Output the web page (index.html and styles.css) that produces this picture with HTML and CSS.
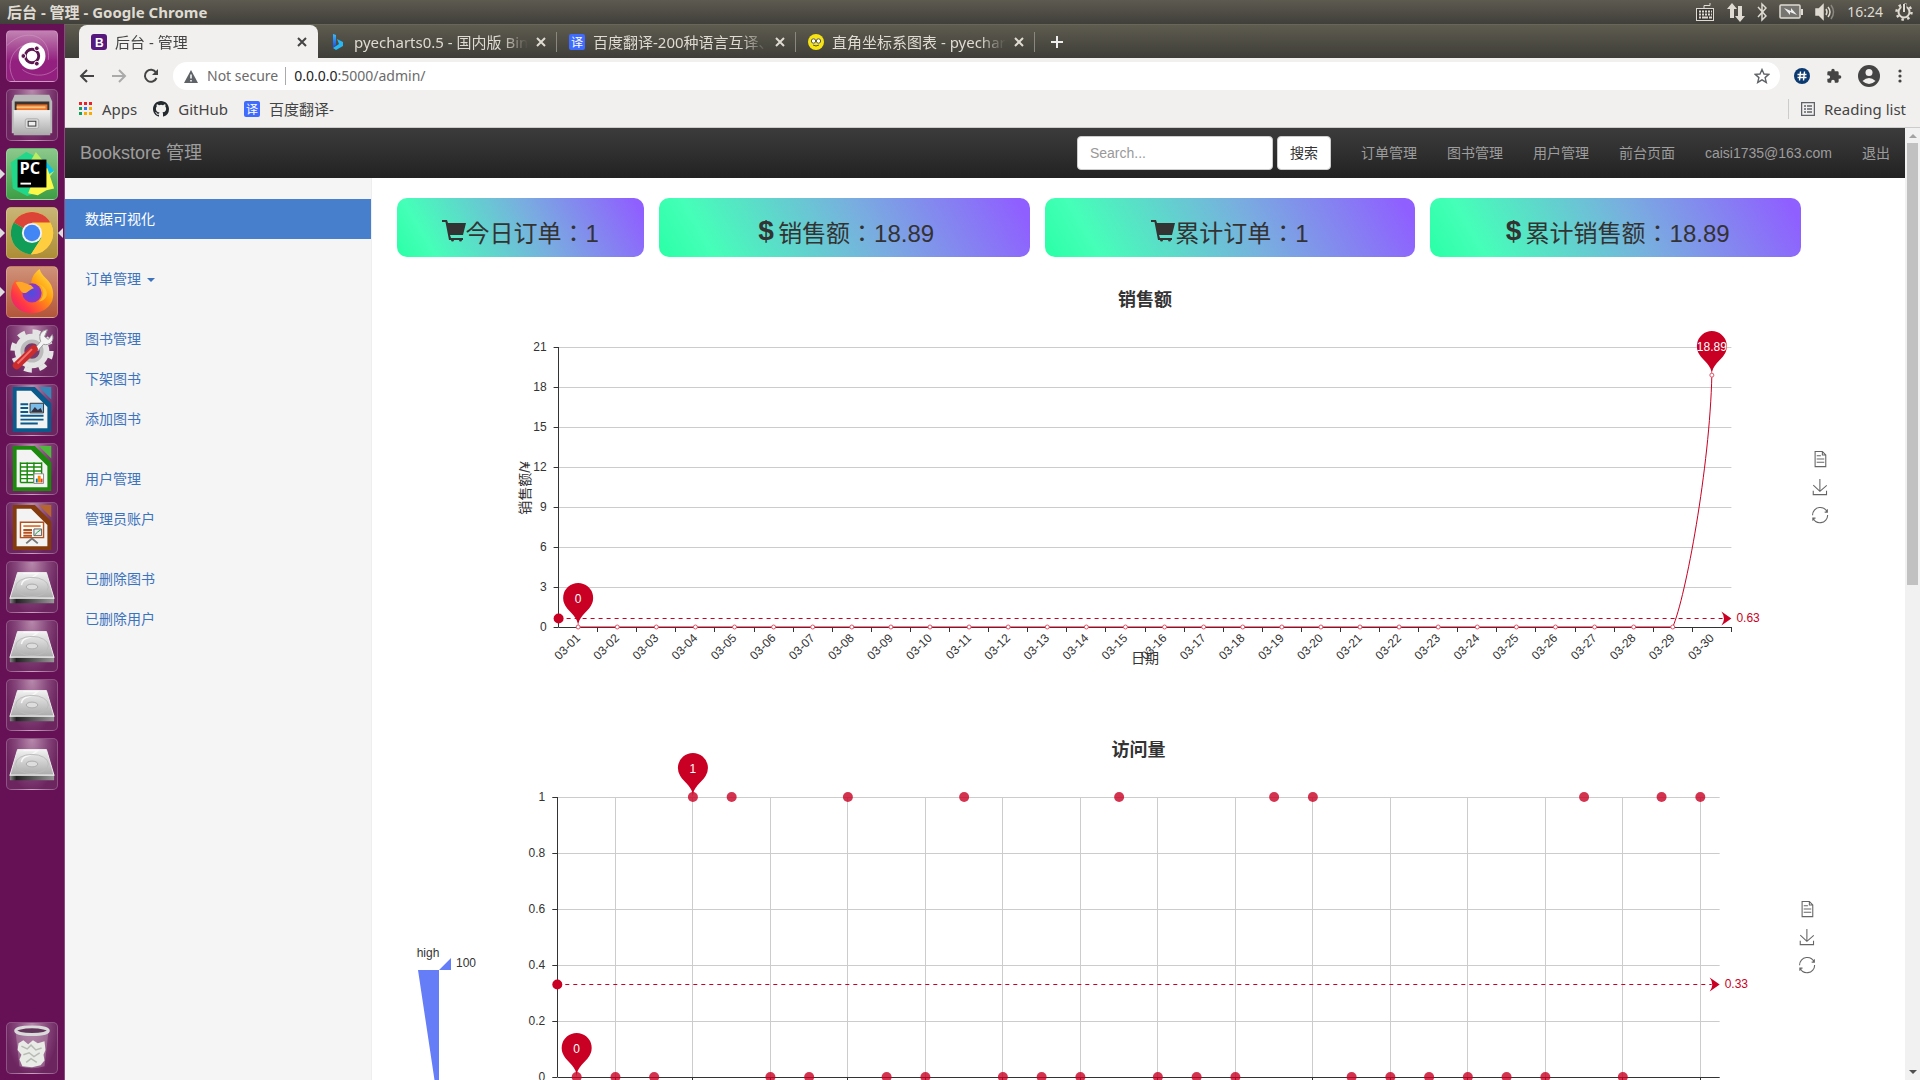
FILE: index.html
```html
<!DOCTYPE html>
<html lang="en">
<head>
<meta charset="utf-8">
<title>后台 - 管理</title>
<link rel="stylesheet" href="styles.css">
</head>
<body>
<svg class="defs" aria-hidden="true">
  <defs>
    <linearGradient id="metal" x1="0" y1="0" x2="0" y2="1"><stop offset="0" stop-color="#f2f2f2"/><stop offset="1" stop-color="#a9a9a9"/></linearGradient>
    <linearGradient id="edge" x1="0" y1="0" x2="1" y2="0"><stop offset="0" stop-color="#888"/><stop offset=".15" stop-color="#222"/><stop offset="1" stop-color="#999"/></linearGradient>
    <linearGradient id="fox" x1="1" y1="0" x2="0" y2="1"><stop offset="0" stop-color="#fff44f"/><stop offset=".4" stop-color="#ff980e"/><stop offset=".75" stop-color="#ff3647"/><stop offset="1" stop-color="#e31587"/></linearGradient>
    <radialGradient id="globe"><stop offset="0" stop-color="#4a4fe0"/><stop offset="1" stop-color="#9033c8"/></radialGradient>
    <linearGradient id="bing" x1="0" y1="0" x2="0" y2="1"><stop offset="0" stop-color="#37bdff"/><stop offset="1" stop-color="#1b48e0"/></linearGradient>
    <symbol id="disk" viewBox="0 0 52 52">
      <path d="M11 11h30l8 27H3z" fill="url(#metal)" stroke="#eee"/>
      <path d="M17 12h15c-7 7-16 4-17 12" fill="none" stroke="#f8f8f8" stroke-width="1.500"/>
      <ellipse cx="26" cy="26" rx="17" ry="10" fill="none" stroke="#bbb"/>
      <ellipse cx="26" cy="26" rx="6" ry="3" fill="#ddd" stroke="#aaa"/>
      <path d="M3 38h46v5H3z" fill="url(#edge)"/><path d="M3 37.500h46" stroke="#fff"/>
    </symbol>
    <symbol id="cart" viewBox="0 0 24 24"><path d="M0 1h5l1 3h18l-3 12H8l1 3h12v2h-1a1.500 1.500 0 1 1-3 0h-5a1.500 1.500 0 1 1-3 0H7L3.500 3H0z"/></symbol>
    <symbol id="close" viewBox="0 0 10 10"><path d="M1 1l8 8M9 1l-8 8" stroke="currentColor" stroke-width="2"/></symbol>
  </defs>
</svg>

<header class="panel">
  <span class="panel-title">后台 - 管理 - Google Chrome</span>
  <div class="indicators">
    <svg width="20" height="24" viewBox="0 0 20 24" fill="none" stroke="#dfdbd2"><path d="M9 8V5.500h6V3"/><rect x="1.500" y="8.500" width="17" height="12" fill="#3a3935"/><path d="M4 11.500h13M4 14.500h13" stroke-width="2" stroke-dasharray="2 1"/><path d="M4 17.500h2m1 0h6m1 0h3" stroke-width="2"/></svg>
    <svg width="18" height="22" viewBox="0 0 18 22" fill="#dfdbd2"><path d="M5 2l5 6H7v9H3V8H0zM13 21l5-6h-3V5h-4v10H8z"/></svg>
    <svg width="10" height="20" viewBox="0 0 10 20" fill="none" stroke="#dfdbd2" stroke-width="1.500"><path d="M1 5l8 9-4 4V2l4 4-8 9"/></svg>
    <svg width="24" height="16" viewBox="0 0 24 16"><rect x="1" y="1" width="20" height="13" rx="1" fill="#777570" stroke="#dfdbd2" stroke-width="1.500"/><path d="M22 5h2v6h-2z" fill="#dfdbd2"/><path d="M5 4l7 3V4l6 7-7-3v3z" fill="#eee"/></svg>
    <svg width="20" height="18" viewBox="0 0 20 18" fill="none" stroke="#dfdbd2" stroke-width="1.500"><path d="M1 6h3l4-4v14l-4-4H1z" fill="#dfdbd2"/><path d="M11 6q2 3 0 6M13 4q4 5 0 10"/><path d="M16 2q5 7 0 14" stroke="#8a8880"/></svg>
    <span class="clock">16:24</span>
    <svg width="18" height="20" viewBox="0 0 18 20" fill="none" stroke="#dfdbd2"><circle cx="9" cy="10" r="5.500" stroke-width="2"/><circle cx="9" cy="10" r="7.500" stroke-width="2.500" stroke-dasharray="2.500 3.400"/><path d="M9 2v8" stroke="#45443e" stroke-width="5"/><path d="M9 2v8" stroke-width="2"/></svg>
  </div>
</header>

<div class="desktop">
  <nav class="launcher" aria-label="Launcher">
    <button class="tile dash" aria-label="Ubuntu"><svg viewBox="0 0 52 52"><g fill="none" stroke="#d8a0cc" stroke-opacity=".5"><path d="M0 15C20-5 46 5 43 30M8 52C-4 34 8 12 26 14M52 38C38 52 20 44 16 40"/></g><circle cx="26" cy="26" r="14" fill="#fff"/><circle cx="26" cy="26" r="7" fill="none" stroke="#5e1650" stroke-width="3"/><g fill="#5e1650" stroke="#fff"><circle cx="17" cy="26" r="2.500"/><circle cx="31" cy="18" r="2.500"/><circle cx="31" cy="34" r="2.500"/></g></svg></button>
    <button class="tile" aria-label="Files"><svg viewBox="0 0 52 52"><path d="M8 5h36l3 7v33H5V12z" fill="#b9b9b9"/><path d="M8 12h36v12H8z" fill="#3c3230"/><path d="M10 15h32v8H10z" fill="#e8762c"/><path d="M10 18h30" stroke="#ffc27d" stroke-width="2"/><path d="M7 21h38v26H7z" fill="url(#metal)"/><path d="M7 21.500h38" stroke="#eee"/><rect x="19" y="30" width="14" height="10" rx="2" fill="#ddd" stroke="#aaa"/><rect x="22" y="32.500" width="8" height="5" fill="#eee" stroke="#333"/></svg></button>
    <button class="tile green running" aria-label="PyCharm"><svg viewBox="0 0 52 52"><path d="M4 14L20 3l14 7 8 6-7 28-14 5-15-8z" fill="#21d789"/><path d="M30 3l8 10-15 2zM38 14l11 9-6 8z" fill="#b7ee62"/><path d="M38 10l11 13-7 4z" fill="#07c3f2"/><path d="M42 20l7 21-8 2-9 5-10-2 10-25z" fill="#fcf84a"/><path d="M11 11h30v29H11z" fill="#000"/><path d="M14 35h11v2H14z" fill="#fff"/><text x="13" y="26" class="logo-text">PC</text></svg></button>
    <button class="tile gold running focused" aria-label="Google Chrome"><svg viewBox="0 0 52 52"><circle cx="26" cy="26" r="22" fill="#ffcd40"/><path d="M26 26L7 15A22 22 0 0 1 45 15z" fill="#db4437"/><path d="M26 26L7 15A22 22 0 0 0 25 48L36 31z" fill="#0f9d58"/><path d="M26 15h19A22 22 0 0 1 25 48L36 31z" fill="#ffcd40"/><circle cx="26" cy="26" r="10.500" fill="#f1f1f1"/><circle cx="26" cy="26" r="8.500" fill="#4285f4"/></svg></button>
    <button class="tile rust running" aria-label="Firefox"><svg viewBox="0 0 52 52"><path d="M34 2c2 8 9 10 12 17 7 17-5 29-20 29C11 48 1 36 5 22c1-5 3-7 5-9l1 5 5-3c2 3 5 3 9 4 0-7 3-13 9-17z" fill="url(#fox)"/><circle cx="26" cy="27" r="10" fill="url(#globe)"/><path d="M9 16c5-2 10 1 16 3l3 3c-5 1-6 5-10 5-3 0-4-3-9-11z" fill="#ffa52a"/><path d="M32 17c8 5 7 15 1 19 10-1 13-13-1-19z" fill="#ffbd2e"/></svg></button>
    <button class="tile" aria-label="System Settings"><svg viewBox="0 0 52 52"><circle cx="26" cy="26" r="18" fill="#e4e4e4"/><circle cx="26" cy="26" r="20" fill="none" stroke="#e4e4e4" stroke-width="5" stroke-dasharray="8 7.700"/><circle cx="26" cy="26" r="10" fill="#763a6b" stroke="#bbb" stroke-width="4"/><path d="M29 23l6-7c-3-7 2-12 7-12l-3 7 4 3 4-5c3 6-3 12-9 10l-6 7z" fill="#f3f3f3" stroke="#999"/><path d="M10 41l18-17" stroke="#cc2b2b" stroke-width="8" stroke-linecap="round"/><path d="M11 39l15-15" stroke="#ef7171" stroke-width="2"/></svg></button>
    <button class="tile" aria-label="Writer"><svg viewBox="0 0 52 52"><path d="M6 2h23l17 17v30H6z" fill="#0b5a8c"/><path d="M10 6h15l17 17v22H10z" fill="#f3f3f3"/><path d="M33 2h13v13z" fill="#3789b8"/><path d="M14 20h8m-8 4h8m-8 4h8m-8 4h24M14 36h24M14 40h18" stroke="#0b5a8c" stroke-width="2"/><path d="M24 19h14v10H24z" fill="#79bce9" stroke="#333"/><path d="M25 28l4-5 3 3 3-2 2 4z" fill="#334"/></svg></button>
    <button class="tile" aria-label="Calc"><svg viewBox="0 0 52 52"><path d="M6 2h23l17 17v30H6z" fill="#1b8a0c"/><path d="M10 6h15l17 17v22H10z" fill="#f3f3f3"/><path d="M33 2h13v13z" fill="#4fb93e"/><path d="M14 19h22v21H14z" fill="#fff"/><path d="M14 20h22M14 24h22M14 28h22M14 32h22M14 36h22M14 40h22M14 19v21m7-21v21m7-21v21m8-21v21" stroke="#1b8a0c" stroke-width="1.500"/><path d="M28 31h10v10H28z" fill="#fff" stroke="#888"/><path d="M30 36h2v4h-2z" fill="#07a"/><path d="M32 33h3v7h-3z" fill="#f80"/><path d="M35 36h2v4h-2z" fill="#d42"/></svg></button>
    <button class="tile" aria-label="Impress"><svg viewBox="0 0 52 52"><path d="M6 2h23l17 17v30H6z" fill="#833a0d"/><path d="M10 6h15l17 17v22H10z" fill="#f3f3f3"/><path d="M33 2h13v13z" fill="#b5652e"/><path d="M14 20h24v16H14z" fill="#fff" stroke="#b5511e" stroke-width="1.500"/><path d="M17 24h18" stroke="#e37c41" stroke-width="2"/><path d="M17 28h9m-9 3h9m-9 3h9" stroke="#b5511e" stroke-width="2"/><path d="M28 27h8v7h-8z" fill="#eee" stroke="#555"/><path d="M29 33l3-3 3-2" stroke="#193" fill="none"/><path d="M20 42l6-5 6 5" stroke="#777" stroke-width="2" fill="none"/></svg></button>
    <button class="tile" aria-label="Volume 1"><svg><use href="#disk"/></svg></button>
    <button class="tile" aria-label="Volume 2"><svg><use href="#disk"/></svg></button>
    <button class="tile" aria-label="Volume 3"><svg><use href="#disk"/></svg></button>
    <button class="tile" aria-label="Volume 4"><svg><use href="#disk"/></svg></button>
    <button class="tile trash" aria-label="Trash"><svg viewBox="0 0 52 52"><path d="M9 10h34l-4 35q-13 4-26 0z" fill="#b795b0" fill-opacity=".5"/><path d="M12 21l5-3 5 4 5-4 5 3 7-2 1 9-2 5 1 6-4 5-9 2-10-1-3-7 2-5-4-5z" fill="#e9ebe6"/><path d="M15 24l6 3 4-4 5 5 6-2M17 33l6-2 5 4 6-4M20 41l5-4 6 4" stroke="#b7bbb3" fill="none" stroke-width="1.500"/><ellipse cx="26" cy="8" rx="17" ry="4" fill="#62365a" stroke="#dadada" stroke-width="3"/></svg></button>
  </nav>

  <div class="browser">
    <div class="tabs" role="tablist">
      <div class="tab active" role="tab" aria-selected="true">
        <svg class="favicon" viewBox="0 0 16 16"><rect width="16" height="16" rx="3" fill="#56187c"/><text x="4" y="13" class="fav-latin">B</text></svg>
        <span class="tab-title">后台 - 管理</span><button class="tab-close" aria-label="Close"><svg><use href="#close"/></svg></button>
      </div>
      <div class="tab" role="tab">
        <svg class="favicon" viewBox="0 0 16 16"><path d="M3 0l3 1v10l-3 3z" fill="url(#bing)"/><path d="M7 5l6 3v4l-7 4-3-2 6-4z" fill="#26b8f4"/></svg>
        <span class="tab-title">pyecharts0.5 - 国内版 Bing 搜索</span><button class="tab-close" aria-label="Close"><svg><use href="#close"/></svg></button>
      </div>
      <div class="tab" role="tab">
        <svg class="favicon" viewBox="0 0 16 16"><rect width="16" height="16" rx="2" fill="#3f6bff"/><text x="2" y="13" class="fav-cjk">译</text></svg>
        <span class="tab-title">百度翻译-200种语言互译、沟通</span><button class="tab-close" aria-label="Close"><svg><use href="#close"/></svg></button>
      </div>
      <div class="tab" role="tab">
        <svg class="favicon" viewBox="0 0 16 16"><circle cx="8" cy="8" r="8" fill="#f8e312"/><circle cx="5.500" cy="7" r="2.200" fill="#fff" stroke="#555"/><circle cx="10.500" cy="7" r="2.200" fill="#fff" stroke="#555"/><path d="M5 11q3 2 6 0" stroke="#555" fill="none"/></svg>
        <span class="tab-title">直角坐标系图表 - pyecharts</span><button class="tab-close" aria-label="Close"><svg><use href="#close"/></svg></button>
      </div>
      <button class="new-tab" aria-label="New tab"><svg viewBox="0 0 12 12"><path d="M6 0v12M0 6h12" stroke="#eee" stroke-width="2"/></svg></button>
    </div>

    <div class="toolbar">
      <button aria-label="Back"><svg viewBox="0 0 16 16" fill="none" stroke="#444" stroke-width="2"><path d="M15 8H2M8 2L2 8l6 6"/></svg></button>
      <button aria-label="Forward"><svg viewBox="0 0 16 16" fill="none" stroke="#aaa" stroke-width="2"><path d="M1 8h13M8 2l6 6-6 6"/></svg></button>
      <button aria-label="Reload"><svg viewBox="0 0 16 16" fill="none" stroke="#444" stroke-width="2"><path d="M13.500 10A6 6 0 1 1 13 4.500"/><path d="M15 1v6H9z" fill="#444" stroke="none"/></svg></button>
      <div class="address">
        <svg class="warn" viewBox="0 0 14 13"><path d="M7 0l7 13H0z" fill="#5f6368"/><path d="M7 4.500v4m0 1.500v1.500" stroke="#fff" stroke-width="1.500"/></svg>
        <span class="insecure">Not secure</span>
        <span class="url"><b>0.0.0.0</b>:5000/admin/</span>
        <svg class="star" viewBox="0 0 16 16"><path d="M8 1.500l2 4.500 4.800.4-3.700 3.200 1.200 4.800L8 11.800l-4.300 2.600 1.200-4.800L1.200 6.400 6 6z" fill="none" stroke="#5f6368" stroke-width="1.400"/></svg>
      </div>
      <div class="actions">
        <svg width="16" height="16" viewBox="0 0 16 16"><circle cx="8" cy="8" r="8" fill="#0b3a70"/><path d="M6.500 3.500l-1 9M10.500 3.500l-1 9M3.500 6.500h9M3.500 9.500h9" stroke="#fff" stroke-width="1.400"/></svg>
        <svg width="16" height="16" viewBox="0 0 24 24" fill="#444"><path d="M20.500 11H19V7a2 2 0 0 0-2-2h-4V3.500a2.500 2.500 0 0 0-5 0V5H4a2 2 0 0 0-2 2v3.800h1.500a2.700 2.700 0 0 1 0 5.400H2V20a2 2 0 0 0 2 2h3.800v-1.500a2.700 2.700 0 0 1 5.400 0V22H17a2 2 0 0 0 2-2v-4h1.500a2.500 2.500 0 0 0 0-5z"/></svg>
        <svg width="22" height="22" viewBox="0 0 22 22"><circle cx="11" cy="11" r="11" fill="#444"/><circle cx="11" cy="7.500" r="3.500" fill="#f1f0ee"/><path d="M4.500 16q6.500-6 13 0-6.500 6-13 0z" fill="#f1f0ee"/></svg>
        <svg width="4" height="14" viewBox="0 0 4 14" fill="#444"><circle cx="2" cy="2" r="1.600"/><circle cx="2" cy="7" r="1.600"/><circle cx="2" cy="12" r="1.600"/></svg>
      </div>
    </div>

    <div class="bookmarks">
      <a href="#"><svg width="14" height="14" viewBox="0 0 14 14"><path d="M0 0h3v3H0zM5 0h3v3H5zM10 0h3v3h-3z" fill="#e8212b"/><path d="M0 5h3v3H0zM0 10h3v3H0z" fill="#12a15a"/><path d="M5 5h3v3H5z" fill="#3b78e7"/><path d="M10 5h3v3h-3zM5 10h3v3H5zM10 10h3v3h-3z" fill="#f9ab00"/></svg>Apps</a>
      <a href="#"><svg width="16" height="16" viewBox="0 0 16 16" fill="#24292e"><path d="M8 0C3.580 0 0 3.580 0 8c0 3.540 2.290 6.530 5.470 7.590.4.070.55-.17.55-.38v-1.490c-2.230.48-2.700-.94-2.700-.94-.36-.93-.89-1.180-.89-1.180-.73-.5.060-.49.060-.49.8.060 1.230.83 1.230.83.710 1.220 1.870.87 2.330.66.070-.52.280-.87.510-1.070-1.780-.2-3.640-.89-3.640-3.950 0-.87.310-1.590.82-2.150-.08-.2-.36-1.020.08-2.120 0 0 .67-.21 2.200.82a7.600 7.600 0 0 1 4 0c1.530-1.040 2.200-.82 2.200-.82.440 1.100.160 1.920.080 2.120.510.560.820 1.270.820 2.150 0 3.070-1.870 3.750-3.650 3.950.290.250.540.730.540 1.480v2.200c0 .210.150.460.550.380A8 8 0 0 0 16 8c0-4.420-3.580-8-8-8z"/></svg>GitHub</a>
      <a href="#"><svg width="16" height="16" viewBox="0 0 16 16"><rect width="16" height="16" rx="2" fill="#3f6bff"/><text x="2" y="13" class="fav-cjk">译</text></svg>百度翻译-</a>
      <a href="#" class="reading"><svg width="14" height="14" viewBox="0 0 14 14" fill="none" stroke="#5f6368"><rect x=".5" y=".5" width="13" height="13" stroke-width="1.500"/><path d="M3 4h2m1 0h5M3 7h2m1 0h5M3 10h2m1 0h5" stroke-width="1.500"/></svg>Reading list</a>
    </div>

    <div class="viewport">
      <div class="page">
        <nav class="navbar">
          <a class="brand" href="#">Bookstore 管理</a>
          <form class="search">
            <input type="text" placeholder="Search..." aria-label="Search">
            <button type="button">搜索</button>
          </form>
          <a href="#">订单管理</a><a href="#">图书管理</a><a href="#">用户管理</a><a href="#">前台页面</a><a href="#">caisi1735@163.com</a><a href="#">退出</a>
        </nav>
        <div class="columns">
          <aside class="sidebar">
            <ul><li><a class="current" href="#">数据可视化</a></li></ul>
            <ul><li><a href="#">订单管理 <span class="caret"></span></a></li></ul>
            <ul><li><a href="#">图书管理</a></li><li><a href="#">下架图书</a></li><li><a href="#">添加图书</a></li></ul>
            <ul><li><a href="#">用户管理</a></li><li><a href="#">管理员账户</a></li></ul>
            <ul><li><a href="#">已删除图书</a></li><li><a href="#">已删除用户</a></li></ul>
          </aside>
          <main>
            <div class="cards">
              <div class="card"><svg><use href="#cart"/></svg>今日订单：1</div>
              <div class="card"><span class="dollar">$</span>销售额：18.89</div>
              <div class="card"><svg><use href="#cart"/></svg>累计订单：1</div>
              <div class="card"><span class="dollar">$</span>累计销售额：18.89</div>
            </div>
            <div class="chart" id="sales"></div>
            <div class="chart visits" id="visits"></div>
          </main>
        </div>
      </div>
      <div class="scrollbar"><span class="up"></span><span class="thumb"></span><span class="down"></span></div>
    </div>
  </div>
</div>
<script src="charts.js"></script>
</body>
</html>
```
FILE: styles.css
```css
* { box-sizing: border-box; }
body {
  margin: 0;
  height: 100vh;
  display: flex;
  flex-direction: column;
  overflow: hidden;
  font: 14px/20px "Noto Sans", "Noto Sans CJK SC", sans-serif;
  color: #333;
}
button { border: 0; padding: 0; background: none; font: inherit; color: inherit; display: block; }
a { text-decoration: none; color: inherit; }
svg { display: block; flex: none; }
.defs { position: absolute; width: 0; height: 0; }

/* Desktop panel */
.panel {
  flex: none;
  height: 24px;
  padding: 0 7px;
  display: flex;
  align-items: center;
  justify-content: space-between;
  background: linear-gradient(#5d5a50, #403f3a);
  color: #dfdbd2;
}
.panel-title { font-weight: 700; font-size: 15px; }
.indicators { display: flex; align-items: center; gap: 12px; }

.desktop { flex: 1; min-height: 0; display: flex; }

/* Launcher */
.launcher {
  flex: none;
  width: 65px;
  padding: 6px;
  display: flex;
  flex-direction: column;
  gap: 7px;
  background: #661155;
  border-right: 1px solid #8a4a7e;
}
.tile {
  position: relative;
  flex: none;
  width: 52px;
  height: 52px;
  border-radius: 5px;
  border: 1px solid rgba(255, 255, 255, .22);
  background: radial-gradient(ellipse at 50% 0, #b889ad 0, #85467a 45%, #6d2560 75%);
}
.tile svg { width: 50px; height: 50px; }
.dash { background: linear-gradient(#c183b2, #93207f 60%); }
.green { background: linear-gradient(#8cc88c, #3d9e45); }
.gold { background: linear-gradient(#c9b577, #ad8d35); }
.rust { background: linear-gradient(#cf9279, #b3553a); }
.trash { margin-top: auto; }
.running::before, .focused::after {
  content: "";
  position: absolute;
  top: 20px;
  left: -7px;
  border: 5px solid transparent;
  border-left-color: #ddd;
  border-right-width: 0;
}
.focused::after {
  left: auto;
  right: -6px;
  border-width: 5px 5px 5px 0;
  border-right-color: #ddd;
}
.logo-text { font: 700 17px "Open Sans", sans-serif; fill: #fff; }
.fav-latin { font: 700 12px "Liberation Sans", sans-serif; fill: #fff; }
.fav-cjk { font: 12px "Noto Sans CJK SC", sans-serif; fill: #fff; }

/* Browser */
.browser { flex: 1; min-width: 0; display: flex; flex-direction: column; }
.tabs {
  flex: none;
  height: 34px;
  padding-left: 14px;
  display: flex;
  background: linear-gradient(#5e5c4f, #3e3d38);
  border-top: 1px solid #68665a;
  font-size: 15px;
}
.tab {
  flex: 0 1 239px;
  min-width: 0;
  display: flex;
  align-items: center;
  padding: 0 11px 0 12px;
  color: #dfdbd2;
}
.tab + .tab { background: linear-gradient(#8a887e, #8a887e) right center / 1px 20px no-repeat; }
.tab.active { background: #f1f0ee; border-radius: 8px 8px 0 0; color: #444; }
.favicon { width: 16px; height: 16px; margin-right: 8px; }
.tab-title {
  flex: 1;
  min-width: 0;
  overflow: hidden;
  white-space: nowrap;
  mask-image: linear-gradient(90deg, #000 85%, transparent);
}
.tab-close { margin-left: 8px; width: 10px; }
.tab-close svg { width: 10px; height: 10px; }
.new-tab { margin-left: 16px; }
.new-tab svg { width: 12px; height: 12px; }

.toolbar {
  flex: none;
  height: 36px;
  padding: 0 18px 0 14px;
  display: flex;
  align-items: center;
  gap: 16px;
  background: #f1f0ee;
}
.toolbar button svg { width: 16px; height: 16px; }
.address {
  flex: 1;
  height: 28px;
  margin-left: -2px;
  padding: 0 10px 0 11px;
  display: flex;
  align-items: center;
  border-radius: 14px;
  background: #fff;
  color: #6b6b6b;
}
.warn { width: 14px; height: 13px; margin-right: 9px; }
.insecure { padding-right: 7px; margin-right: 8px; border-right: 1px solid #aaa; line-height: 18px; }
.url b { font-weight: 400; color: #222; }
.star { width: 16px; height: 16px; margin-left: auto; }
.actions { display: flex; align-items: center; gap: 16px; margin-left: -2px; }
.actions svg:last-child { margin-left: 2px; }

.bookmarks {
  flex: none;
  height: 34px;
  padding: 0 14px 4px;
  display: flex;
  align-items: center;
  gap: 16px;
  background: #f1f0ee;
  border-bottom: 1px solid #ccc;
  color: #444;
  font-size: 15px;
}
.bookmarks a { display: flex; align-items: center; gap: 9px; }
.bookmarks .reading { margin-left: auto; padding-left: 12px; border-left: 1px solid #ccc; }

/* Web page */
.viewport {
  flex: 1;
  min-height: 0;
  display: flex;
  overflow: hidden;
  background: #fff;
  font-family: "Liberation Sans", "Noto Sans CJK JP", sans-serif;
}
.page { flex: 1; min-width: 0; }
.navbar {
  height: 50px;
  padding: 0 15px;
  display: flex;
  align-items: center;
  gap: 30px;
  background: linear-gradient(#3c3c3c, #222);
  color: #9d9d9d;
}
.brand { font-size: 18px; margin-right: auto; }
.search { display: flex; gap: 4px; }
.search input {
  width: 196px;
  height: 34px;
  padding: 6px 12px;
  border: 1px solid #ccc;
  border-radius: 4px;
  font: inherit;
}
.search input::placeholder { color: #999; opacity: 1; }
.search button {
  height: 34px;
  padding: 0 12px;
  border: 1px solid #ccc;
  border-radius: 4px;
  background: #fff;
  color: #333;
}
.columns { display: grid; grid-template-columns: 1fr 5fr; }
.sidebar { padding-top: 21px; background: #f5f5f5; border-right: 1px solid #eee; }
.sidebar ul { list-style: none; margin: 0 0 20px; padding: 0; }
.sidebar a { display: block; padding: 10px 20px; color: #3d73bd; }
.sidebar .current { background: #477fcd; color: #fff; }
.caret {
  display: inline-block;
  margin-left: 2px;
  vertical-align: middle;
  border: 4px solid transparent;
  border-top-color: currentColor;
  border-bottom: 0;
}
main { min-width: 0; padding: 20px 27px 0 25px; }
.cards { display: grid; grid-template-columns: 2fr 3fr 3fr 3fr; gap: 15px; margin-right: 77px; }
.card {
  height: 59px;
  padding-top: 12px;
  display: flex;
  align-items: center;
  justify-content: center;
  border-radius: 10px;
  background: linear-gradient(60deg, #2affa6 0, #45ffb8 14%, #78afdf 55%, #8f60ff 96%);
  font-size: 24px;
  line-height: 26px;
}
.card svg { width: 24px; height: 24px; margin-bottom: 6px; fill: #333; }
.dollar { width: 24px; margin-bottom: 6px; font-weight: 700; font-size: 28px; text-align: center; }

.chart { height: 400px; margin: 30px 0 0 15px; }
.chart + .chart { margin-top: 50px; }
.visits { margin-right: 13px; }
.chart svg { width: 100%; height: 400px; overflow: visible; }
.chart text { font-size: 12px; fill: #333; }
.chart .title { font-size: 18px; font-weight: 700; }
.chart .name { font-size: 14px; }
.chart .pin-label { fill: #fff; }
.chart .avg { fill: #c90023; }
.grid-line { stroke: #ccc; }
.axis { stroke: #333; fill: none; }
.red { fill: #c90023; }
.red-line { stroke: #c90023; fill: none; }
.dashed { stroke-dasharray: 4 4; }
.ring { stroke: #dc5468; fill: #fff; }
.dot { fill: #c90023; fill-opacity: .8; }
.tool { stroke: #666; fill: none; stroke-width: 4; }
.visual-map { fill: #667df8; }

.scrollbar {
  flex: none;
  width: 15px;
  display: flex;
  flex-direction: column;
  align-items: center;
  padding: 6px 0;
  background: #f1f1f1;
}
.up, .down { border: 4px solid transparent; }
.up { border-top: 0; border-bottom-color: #a3a3a3; }
.down { border-bottom: 0; border-top-color: #505050; margin-top: auto; }
.thumb { width: 11px; height: 47%; margin-top: 5px; background: #c1c1c1; }
```
FILE: charts.js
```javascript
const TOP = 60, BOTTOM = 340;

const TOOLS = [
  'M17.5,17.3H33M45.4,29.5h-28M11.5,2v56H51V14.8L38.4,2H11.5zM38.4,2.2v12.7H51M45.4,41.7h-28',
  'M4.7,22.9L29.3,45.5L54.7,23.4M4.6,43.6L4.6,58L53.8,58L53.8,43.6M29.2,45.1L29.2,0',
  'M47,18.9h9.8V8.7M56.3,20.1C52.1,9,40.5,0.6,26.8,2.1C12.6,3.7,1.6,16.2,2.1,30.6M13,41.1H3.1v10.2M3.7,39.9c4.2,11.1,15.8,19.5,29.5,18c14.2-1.6,25.2-14.1,24.7-28.5'
];

const crisp = v => Math.round(v) + 0.5;
const line = (x1, y1, x2, y2, cls) => `<path class="${cls}" d="M${x1} ${y1}L${x2} ${y2}"/>`;
const text = (x, y, s, cls = '', anchor = 'start', extra = '') =>
  `<text x="${x}" y="${y}" class="${cls}" text-anchor="${anchor}" ${extra}>${s}</text>`;

function pin(x, y, label) {
  return `<path class="red" transform="translate(${x} ${y})" d="M-12.8-21.2A15 15 0 1 1 12.8-21.2C8.200-13.500 0-10.500 0 0C0-10.500-8.200-13.500-12.800-21.200z"/>` +
    text(x, y - 24, label, 'pin-label', 'middle');
}

function frame(width, title, steps, max) {
  const left = width * 0.1, right = width * 0.9;
  let out = text(width / 2, 19, title, 'title', 'middle');
  for (let i = 0; i <= steps; i++) {
    const y = crisp(BOTTOM - (BOTTOM - TOP) * i / steps);
    if (i) out += line(left, y, right, y, 'grid-line');
    out += line(left - 5, y, left, y, 'axis');
    out += text(left - 12, y + 3, String(+(max * i / steps).toFixed(1)), '', 'end');
  }
  return out;
}

function average(width, y, label) {
  const left = width * 0.1, right = width * 0.9, cy = crisp(y - 0.5);
  return line(left, cy, right - 8, cy, 'red-line dashed') +
    `<circle class="red" cx="${left}" cy="${cy}" r="5"/>` +
    `<path class="red" d="M${right} ${cy}l-10-7q5 7 0 14z"/>` +
    text(right + 5, cy + 3, label, 'avg');
}

function tools(width) {
  return TOOLS.map((d, i) =>
    `<path class="tool" transform="translate(${width - 66} ${164 + i * 28}) scale(.27)" d="${d}"/>`).join('');
}

function axes(width) {
  const left = crisp(width * 0.1 - 0.5);
  return line(left, TOP, left, BOTTOM, 'axis') +
    line(left, BOTTOM + 0.5, width * 0.9, BOTTOM + 0.5, 'axis');
}

function drawSales(el) {
  const w = el.clientWidth, left = w * 0.1, step = w * 0.8 / 30;
  const px = i => left + step * (i + 0.5);
  const peak = BOTTOM - 18.89 * 280 / 21;
  let out = frame(w, '销售额', 7, 21) + axes(w);
  for (let i = 0; i < 30; i++) {
    const tx = crisp(left + step * (i + 1) - 0.5), lx = px(i);
    out += line(tx, BOTTOM, tx, BOTTOM + 5, 'axis');
    out += text(lx, 353, '03-' + String(i + 1).padStart(2, '0'), '', 'end', `transform="rotate(-45 ${lx} 349)"`);
  }
  out += text(w / 2, 376, '日期', 'name', 'middle');
  out += text(left - 29, 201, '销售额/¥', 'name', 'middle', `transform="rotate(-90 ${left - 29} 201)"`);
  const x0 = px(28);
  out += `<path class="red-line" d="M${px(0)} ${BOTTOM}H${x0}C${x0 + 13} 310 ${x0 + 37} 180 ${px(29)} ${peak}"/>`;
  out += average(w, BOTTOM - 0.63 * 280 / 21, '0.63');
  out += pin(px(0), BOTTOM, '0') + pin(px(29), peak, '18.89') + tools(w);
  for (let i = 0; i < 30; i++) {
    out += `<circle class="ring" cx="${px(i)}" cy="${i === 29 ? peak : BOTTOM}" r="2"/>`;
  }
  el.innerHTML = `<svg>${out}</svg>`;
}

function drawVisits(el) {
  const w = el.clientWidth, left = w * 0.1, step = w * 0.8 / 30;
  const ones = [3, 4, 7, 10, 14, 18, 19, 26, 28, 29];
  const px = i => left + step * (i + 0.5);
  let out = frame(w, '访问量', 5, 1);
  for (let i = 1; i < 30; i += 2) {
    const x = crisp(px(i) - 0.5);
    out += line(x, TOP, x, BOTTOM, 'grid-line') + line(x, BOTTOM, x, BOTTOM + 5, 'axis');
  }
  out += axes(w);
  for (let i = 0; i < 30; i++) {
    out += `<circle class="dot" cx="${px(i)}" cy="${ones.includes(i) ? TOP : BOTTOM}" r="5"/>`;
  }
  out += average(w, BOTTOM - 0.33 * 280, '0.33');
  out += pin(px(3), TOP, '1') + pin(px(0), BOTTOM, '0') + tools(w);
  out += text(16, 220, 'high', '', 'middle') + text(44, 230, '100');
  out += '<path class="visual-map" d="M6 233h21v140zM27 233h12v-12z"/>';
  el.innerHTML = `<svg>${out}</svg>`;
}

function draw() {
  drawSales(document.getElementById('sales'));
  drawVisits(document.getElementById('visits'));
}
draw();
addEventListener('resize', draw);
```
